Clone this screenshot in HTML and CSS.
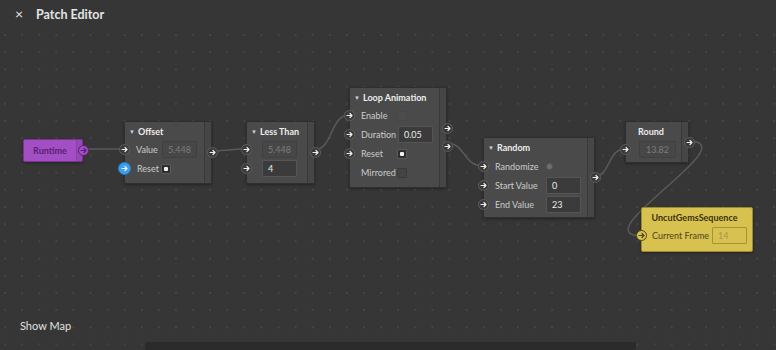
FILE: index.html
```html
<!DOCTYPE html>
<html>
<head>
<meta charset="utf-8">
<title>Patch Editor</title>
<link rel="stylesheet" href="styles.css">
</head>
<body>
<div class="app">
  <header class="titlebar">
    <span class="close">×</span>
    <span class="title">Patch Editor</span>
  </header>
  <main class="canvas">
    <svg class="wires" width="776" height="322" viewBox="0 28 776 322">
      <path d="M84 149 L122 149"/>
      <path d="M210 151 C228 151 228 149 246 149"/>
      <path d="M314 150 C333 150 330 115 349 115"/>
      <path d="M446 143 C466 143 463 166 483 166"/>
      <path d="M593 177 C611 177 607 149 625 149"/>
      <path d="M688 141 C750 141 580 236 642 236"/>
    </svg>

    <div class="node runtime">
      <div class="body rt-body">Runtime</div>
      <div class="strip rt-strip">
        <span class="port rt-port"><svg viewBox="0 0 9 9"><path d="M2 4.5h5M5 2.5l2 2-2 2"/></svg></span>
      </div>
    </div>

    <div class="node n-offset">
      <div class="body b-offset">
        <div class="head"><span class="tri">▼</span>Offset</div>
        <div class="row">
          <span class="port"><svg viewBox="0 0 9 9"><path d="M2 4.5h5M5 2.5l2 2-2 2"/></svg></span>
          <span class="label">Value</span>
          <span class="cell"><span class="field off">5.448</span></span>
        </div>
        <div class="row">
          <span class="port blue"><svg viewBox="0 0 9 9"><path d="M2 4.5h5M5 2.5l2 2-2 2"/></svg></span>
          <span class="label">Reset</span>
          <span class="cell"><span class="check on"></span></span>
        </div>
      </div>
      <div class="strip">
        <span class="port"><svg viewBox="0 0 9 9"><path d="M2 4.5h5M5 2.5l2 2-2 2"/></svg></span>
      </div>
    </div>

    <div class="node n-less">
      <div class="body b-less">
        <div class="head"><span class="tri">▼</span>Less Than</div>
        <div class="row">
          <span class="port"><svg viewBox="0 0 9 9"><path d="M2 4.5h5M5 2.5l2 2-2 2"/></svg></span>
          <span class="cell push"><span class="field off">5.448</span></span>
        </div>
        <div class="row">
          <span class="port"><svg viewBox="0 0 9 9"><path d="M2 4.5h5M5 2.5l2 2-2 2"/></svg></span>
          <span class="cell push"><span class="field">4</span></span>
        </div>
      </div>
      <div class="strip">
        <span class="port"><svg viewBox="0 0 9 9"><path d="M2 4.5h5M5 2.5l2 2-2 2"/></svg></span>
      </div>
    </div>

    <div class="node n-loop">
      <div class="body b-loop">
        <div class="head"><span class="tri">▼</span>Loop Animation</div>
        <div class="row">
          <span class="port"><svg viewBox="0 0 9 9"><path d="M2 4.5h5M5 2.5l2 2-2 2"/></svg></span>
          <span class="label">Enable</span>
          <span class="cell"><span class="check dim"></span></span>
        </div>
        <div class="row">
          <span class="port"><svg viewBox="0 0 9 9"><path d="M2 4.5h5M5 2.5l2 2-2 2"/></svg></span>
          <span class="label">Duration</span>
          <span class="cell"><span class="field">0.05</span></span>
        </div>
        <div class="row">
          <span class="port"><svg viewBox="0 0 9 9"><path d="M2 4.5h5M5 2.5l2 2-2 2"/></svg></span>
          <span class="label">Reset</span>
          <span class="cell"><span class="check on"></span></span>
        </div>
        <div class="row">
          <span class="noport"></span>
          <span class="label">Mirrored</span>
          <span class="cell"><span class="check empty"></span></span>
        </div>
      </div>
      <div class="strip">
        <span class="port"><svg viewBox="0 0 9 9"><path d="M2 4.5h5M5 2.5l2 2-2 2"/></svg></span>
        <span class="port"><svg viewBox="0 0 9 9"><path d="M2 4.5h5M5 2.5l2 2-2 2"/></svg></span>
      </div>
    </div>

    <div class="node n-random">
      <div class="body b-random">
        <div class="head tall"><span class="tri">▼</span>Random</div>
        <div class="row">
          <span class="port"><svg viewBox="0 0 9 9"><path d="M2 4.5h5M5 2.5l2 2-2 2"/></svg></span>
          <span class="label">Randomize</span>
          <span class="cell"><span class="pulse"></span></span>
        </div>
        <div class="row">
          <span class="port"><svg viewBox="0 0 9 9"><path d="M2 4.5h5M5 2.5l2 2-2 2"/></svg></span>
          <span class="label">Start Value</span>
          <span class="cell"><span class="field">0</span></span>
        </div>
        <div class="row">
          <span class="port"><svg viewBox="0 0 9 9"><path d="M2 4.5h5M5 2.5l2 2-2 2"/></svg></span>
          <span class="label">End Value</span>
          <span class="cell"><span class="field">23</span></span>
        </div>
      </div>
      <div class="strip">
        <span class="port"><svg viewBox="0 0 9 9"><path d="M2 4.5h5M5 2.5l2 2-2 2"/></svg></span>
      </div>
    </div>

    <div class="node n-round">
      <div class="body b-round">
        <div class="head center">Round</div>
        <div class="row">
          <span class="port"><svg viewBox="0 0 9 9"><path d="M2 4.5h5M5 2.5l2 2-2 2"/></svg></span>
          <span class="cell wide push"><span class="field off center">13.82</span></span>
        </div>
      </div>
      <div class="strip">
        <span class="port"><svg viewBox="0 0 9 9"><path d="M2 4.5h5M5 2.5l2 2-2 2"/></svg></span>
      </div>
    </div>

    <div class="node n-uncut">
      <div class="body b-uncut">
        <div class="head center">UncutGemsSequence</div>
        <div class="row">
          <span class="port yel"><svg viewBox="0 0 9 9"><path d="M2 4.5h5M5 2.5l2 2-2 2"/></svg></span>
          <span class="label">Current Frame</span>
          <span class="cell"><span class="field yfield">14</span></span>
        </div>
      </div>
    </div>

    <div class="showmap">Show Map</div>
    <div class="hscroll"></div>
  </main>
</div>
</body>
</html>
```

FILE: styles.css
```css
* { box-sizing: border-box; margin: 0; padding: 0; }
html, body { width: 776px; height: 350px; overflow: hidden; }
body { background: #363636; font-family: Lato, "Open Sans", sans-serif; color: #ddd; }

.app { display: flex; flex-direction: column; height: 350px; }

.titlebar { height: 28px; flex: none; display: flex; align-items: center; padding-left: 15px; gap: 12px; }
.close { font-size: 14px; color: #e6e6e6; line-height: 1; width: 9px; }
.title { font-weight: 700; font-size: 12.5px; color: #e4e4e4; }

.canvas {
  position: relative; flex: 1;
  background-color: #363636;
  background-image: radial-gradient(circle, #464646 0.9px, transparent 1.4px);
  background-size: 17.1px 17.2px;
  background-position: -3.5px -1.5px;
}

.wires { position: absolute; left: 0; top: 0; fill: none; stroke: #5a5a5a; stroke-width: 1.5; }

.node {
  position: absolute; display: flex;
  background: #4a4a4a; border: 1px solid #2f2f2f; border-radius: 2px;
  box-shadow: 0 1px 3px rgba(0,0,0,.35);
}
.body { display: flex; flex-direction: column; padding-bottom: 5px; }
.strip {
  width: 7px; background: #464646; border-left: 1px solid #393939;
  display: flex; flex-direction: column; justify-content: center; align-items: flex-end; gap: 7px;
}
.strip .port { margin-right: -7px; }

.head { height: 18px; display: flex; align-items: center; padding-left: 4px; gap: 3px; font-weight: 700; font-size: 9px; color: #ededed; white-space: nowrap; }
.head.tall { height: 19px; }
.head.center { justify-content: center; padding-left: 0; }
.tri { font-size: 6px; color: #cfcfcf; }

.row { height: 19px; display: flex; align-items: center; }
.row > .port:first-child, .row > .noport:first-child { margin-left: -6px; }
.noport { width: 11px; height: 11px; flex: none; }
.label { flex: 1; font-size: 9px; color: #cbcbcb; padding-left: 6px; white-space: nowrap; }
.cell { width: 35px; height: 17px; display: flex; align-items: center; flex: none; }
.cell.wide { width: 37px; }
.cell.push { margin-left: auto; }

.field {
  width: 100%; height: 17px; display: flex; align-items: center; padding-left: 5px;
  background: #3b3b3b; border: 1px solid #555; border-radius: 1px;
  font-size: 9px; color: #ececec;
}
.field.off { background: #474747; border-color: #404040; color: #7c7c7c; }
.field.center { justify-content: center; padding-left: 0; }

.check { width: 10px; height: 10px; margin-left: -1px; border: 1px solid #5a5a5a; background: #2f2f2f; position: relative; border-radius: 1px; }
.check.on::after { content: ""; position: absolute; left: 2px; top: 2px; width: 4px; height: 4px; background: #f2f2f2; border-radius: 1px; }
.check.dim { background: #4c4c4c; border-color: #474747; }
.check.empty { background: #444; border-color: #3a3a3a; }
.pulse { width: 5px; height: 5px; margin-left: 1px; border-radius: 50%; background: #6e6e6e; box-shadow: 0 0 0 1px #555; }

.port {
  width: 11px; height: 11px; flex: none; border-radius: 50%;
  background: #393939; border: 1px solid #5e5e5e;
  display: flex; align-items: center; justify-content: center;
}
.port svg { width: 9px; height: 9px; fill: none; stroke: #eee; stroke-width: 1.2; stroke-linecap: round; stroke-linejoin: round; }
.port.blue { width: 13px; height: 13px; margin-left: -7px !important; background: #3a9ff0; border-color: #2c7fc4; }

/* positions on the free canvas (page y minus 28px header) */
.runtime { left: 23px; top: 111px; height: 23px; background: #a24fc4; border-color: #7a3494; }
.rt-body { width: 52px; padding: 0; align-items: center; justify-content: center; font-weight: 700; font-size: 9px; color: #5a1e72; }
.rt-strip { width: 6px; background: #9747b8; border-left-color: #8a3ea8; }
.port.rt-port { background: #a24fc4; border-color: #5a1e72; }
.port.rt-port svg { stroke: #5a1e72; }

.n-offset { left: 124px; top: 93px; }
.b-offset { width: 79px; padding-right: 7px; }

.n-less { left: 246px; top: 93px; }
.b-less { width: 60px; padding-right: 10px; }

.n-loop { left: 349px; top: 59px; }
.b-loop { width: 89px; padding-right: 6px; }

.n-random { left: 483px; top: 109px; }
.b-random { width: 103px; padding-right: 6px; padding-bottom: 3px; }

.n-round { left: 625px; top: 93px; }
.b-round { width: 55px; padding-right: 5px; padding-bottom: 3px; }

.n-uncut { left: 641px; top: 179px; background: #d7c14f; border-color: #9c8a32; }
.b-uncut { width: 110px; padding-right: 5px; padding-bottom: 6px; }
.n-uncut .head { color: #3a3210; }
.n-uncut .label { color: #4e4519; padding-left: 5px; }
.port.yel { background: #d7c14f; border-color: #4e4519; }
.port.yel svg { stroke: #4e4519; }
.field.yfield { background: #d7c14f; border-color: #a5933a; color: #a4965a; }

.showmap { position: absolute; left: 20px; top: 291px; font-size: 11px; color: #e0e0e0; }
.hscroll { position: absolute; left: 145px; bottom: 0; width: 491px; height: 8px; background: #2b2b2b; border-radius: 2px 2px 0 0; }
```
